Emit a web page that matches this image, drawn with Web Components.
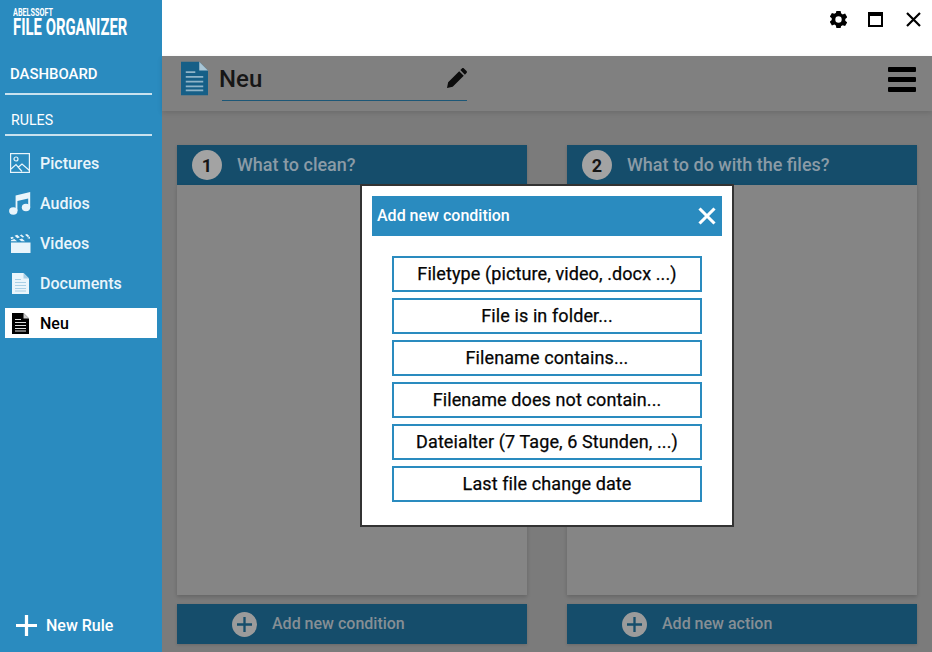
<!DOCTYPE html>
<html lang="en">
<head>
<meta charset="utf-8">
<title>File Organizer</title>
<style>
  html, body { margin: 0; height: 100%; overflow: hidden; }
  body { font-family: Roboto, "Liberation Sans", sans-serif; }
</style>
</head>
<body>
<app-window>
  <app-sidebar slot="sidebar">
    <nav-item icon="picture">Pictures</nav-item>
    <nav-item icon="music">Audios</nav-item>
    <nav-item icon="clapper">Videos</nav-item>
    <nav-item icon="doc">Documents</nav-item>
    <nav-item icon="doc" selected>Neu</nav-item>
  </app-sidebar>
  <title-bar slot="top"></title-bar>
  <rule-header slot="top">Neu</rule-header>
  <step-panel num="1" heading="What to clean?" action="Add new condition"></step-panel>
  <step-panel num="2" heading="What to do with the files?" action="Add new action"></step-panel>
  <condition-dialog slot="overlay" heading="Add new condition">
    <dialog-option>Filetype (picture, video, .docx ...)</dialog-option>
    <dialog-option>File is in folder...</dialog-option>
    <dialog-option>Filename contains...</dialog-option>
    <dialog-option>Filename does not contain...</dialog-option>
    <dialog-option>Dateialter (7 Tage, 6 Stunden, ...)</dialog-option>
    <dialog-option>Last file change date</dialog-option>
  </condition-dialog>
</app-window>

<script>
const ICONS = {
  picture: `<svg viewBox="0 0 20 20" width="20" height="20" fill="none" stroke="currentColor" stroke-width="1.2">
      <rect x=".6" y=".6" width="18.8" height="18.8"/><circle cx="6" cy="6" r="2"/>
      <path d="M1 16l5-4.5 6 7M8.500 14l3.500-3 7.500 6.500"/></svg>`,
  music: `<svg viewBox="0 0 22 23" width="22" height="23" fill="currentColor">
      <ellipse cx="4.300" cy="19" rx="4.200" ry="3.700"/><ellipse cx="17" cy="15.500" rx="4.200" ry="3.700"/>
      <path d="M6.600 19V3.500L21.200 0v15.500h-2V6.500L8.400 9v10z"/></svg>`,
  clapper: `<svg viewBox="0 0 21 19" width="21" height="19" fill="currentColor">
      <path d="M1 8.500h19.500V19H1z"/>
      <path d="M.4 3.600l2-.9 1.600 1.300-2.700 1.200zM4.600 1.800l2.500-1 2.800 2.400-2.500 1zM9.800 1.200l1.800-.7 2.700 2.400-1.800.7zM15 .7l2-.7 2.600 2.300-2 .8z"/>
      <path d="M1 6.300l3.300-1.400 2.800 2.400H1zM9 5.600l3-1.200 3 2.900H11.400zM17 4l3-1.200v2z"/></svg>`,
  doc: `<svg viewBox="0 0 17 21" width="17" height="21">
      <path fill="currentColor" d="M0 0h11.500L17 5.500V21H0z"/>
      <path fill="var(--fold, #a9d0e6)" d="M11.500 0L17 5.500h-5.500z"/>
      <path stroke="var(--lines, #a9d0e6)" stroke-width="1.100" d="M3 6.500h6M3 9.500h11M3 12.500h11M3 15.500h11M3 18h11"/></svg>`,
  plus: `<svg viewBox="0 0 22 22" width="22" height="22" fill="currentColor"><path d="M9.300 0h3.400v9.300H22v3.400h-9.300V22H9.300v-9.300H0V9.300h9.300z"/></svg>`,
  close: `<svg viewBox="0 0 18 18" width="18" height="18" fill="none" stroke="currentColor" stroke-width="3.100"><path d="M1.500 1.500l15 15M16.500 1.500l-15 15"/></svg>`
};

class AppWindow extends HTMLElement {
  constructor() {
    super();
    this.attachShadow({mode: 'open'}).innerHTML = `
      <style>
        :host { display: grid; grid-template-columns: 162px 1fr; height: 652px; position: relative; overflow: hidden; }
        .right { display: flex; flex-direction: column; min-width: 0; background: #7b7b7b; }
        .panels { flex: 1; display: grid; grid-template-columns: 350px 350px; gap: 40px; padding: 34px 15px 8px; min-height: 0; }
      </style>
      <slot name="sidebar"></slot>
      <div class="right">
        <slot name="top"></slot>
        <div class="panels"><slot></slot></div>
      </div>
      <slot name="overlay"></slot>`;
  }
}

class AppSidebar extends HTMLElement {
  constructor() {
    super();
    this.attachShadow({mode: 'open'}).innerHTML = `
      <style>
        :host { display: flex; flex-direction: column; background: #2a8bbf; color: #fff; height: 652px; }
        .logo { padding: 7px 0 0 13px; height: 52px; box-sizing: border-box; font-weight: 700; }
        .logo div { transform-origin: 0 0; white-space: nowrap; }
        .small { font-size: 11px; line-height: 11px; transform: scaleX(.66); }
        .big { font-size: 24px; line-height: 18px; transform: scaleX(.62); }
        .sect { margin: 0 10px 0 5px; border-bottom: 2px solid rgba(255,255,255,.75); padding-left: 5px; }
        .dash { font-size: 14.900px; font-weight: 500; height: 41px; line-height: 45px; }
        .rules { font-size: 14.200px; height: 39px; line-height: 50px; padding-left: 6px; margin-bottom: 12px; }
        .items { display: flex; flex-direction: column; gap: 10px; }
        .new { margin-top: auto; display: flex; align-items: center; gap: 9px; padding: 0 0 16px 16px; font-size: 16px; font-weight: 500; }
        .new svg { width: 21px; height: 21px; }
      </style>
      <div class="logo"><div class="small">ABELSSOFT</div><div class="big">FILE ORGANIZER</div></div>
      <div class="sect dash">DASHBOARD</div>
      <div class="sect rules">RULES</div>
      <div class="items"><slot></slot></div>
      <div class="new">${ICONS.plus}<span>New Rule</span></div>`;
  }
}

class NavItem extends HTMLElement {
  constructor() {
    super();
    this.attachShadow({mode: 'open'});
  }
  connectedCallback() {
    this.shadowRoot.innerHTML = `
      <style>
        :host { display: flex; align-items: center; height: 30px; margin-left: 5px; width: 152px; font-size: 16px; font-weight: 500; color: #eaf5fb; }
        :host([selected]) { background: #fff; color: #000; --fold: #ccc; --lines: #ddd; }
        .ic { width: 35px; display: flex; justify-content: center; padding-right: 5px; box-sizing: border-box; }
      </style>
      <span class="ic">${ICONS[this.getAttribute('icon')]}</span><slot></slot>`;
  }
}

class TitleBar extends HTMLElement {
  constructor() {
    super();
    this.attachShadow({mode: 'open'}).innerHTML = `
      <style>
        :host { display: flex; justify-content: flex-end; align-items: center; height: 56px; padding: 0 11px 17px 0; box-sizing: border-box; background: #fff; color: #000; }
        svg { display: block; }
        .gear { margin-right: 21px; }
        .max { margin-right: 23px; }
      </style>
      <svg class="gear" viewBox="0 0 24 24" width="17" height="17" fill="currentColor"><path fill-rule="evenodd" d="M9 0h6l.7 3.600c.8.300 1.500.700 2.100 1.200l3.500-1.200 3 5.200-2.800 2.400c.1.800.1 1.600 0 2.400l2.800 2.400-3 5.200-3.500-1.200c-.6.500-1.300.9-2.100 1.200L15 24H9l-.7-3.600c-.8-.3-1.500-.7-2.100-1.200l-3.500 1.200-3-5.200 2.800-2.400c-.1-.8-.1-1.600 0-2.400L-.3 8l3-5.200 3.500 1.200c.6-.5 1.300-.9 2.100-1.200zM12 16.500a4.500 4.500 0 1 0 0-9 4.500 4.500 0 0 0 0 9z"/></svg>
      <svg class="max" width="15" height="15" viewBox="0 0 15 15"><path fill="currentColor" fill-rule="evenodd" d="M0 0h15v15H0zM2 4v9h11V4z"/></svg>
      <svg width="15" height="15" viewBox="0 0 15 15" fill="none" stroke="currentColor" stroke-width="2.200"><path d="M1 1l13 13M14 1L1 14"/></svg>`;
  }
}

class RuleHeader extends HTMLElement {
  constructor() {
    super();
    this.attachShadow({mode: 'open'}).innerHTML = `
      <style>
        :host { display: flex; align-items: flex-start; height: 55px; box-sizing: border-box; background: #808080; color: #161616; padding: 5px 16px 0 19px; box-shadow: 0 2px 5px rgba(0,0,0,.12); position: relative; }
        .doc { width: 27px; height: 35px; --fold: #a9c6d6; --lines: #8fb4c8; color: #165f87; }
        .doc svg { width: 27px; height: 35px; display: block; }
        .name { position: relative; margin-left: 14px; width: 245px; height: 39px; border-bottom: 1px solid #1c5777; }
        .name span { position: absolute; left: -3px; top: 2px; font-size: 24px; font-weight: 500; line-height: 32px; }
        .name svg { position: absolute; right: 0; top: 7px; }
        .menu { margin-left: auto; margin-top: 6px; width: 28px; display: flex; flex-direction: column; gap: 5px; }
        .menu i { display: block; height: 5px; background: #000; border-radius: 1px; }
      </style>
      <span class="doc">${ICONS.doc}</span>
      <div class="name"><span><slot></slot></span>
        <svg width="20" height="20" viewBox="0 0 21 21" fill="#0c0c0c"><path d="M0 21l1.200-6L12.800 3.400l4.800 4.800L6 19.800zM14 2.200L15.700.5c.6-.6 1.500-.6 2.100 0l2.700 2.700c.6.600.6 1.500 0 2.100L18.800 7z"/></svg>
      </div>
      <div class="menu"><i></i><i></i><i></i></div>`;
  }
}

class StepPanel extends HTMLElement {
  constructor() {
    super();
    this.attachShadow({mode: 'open'});
  }
  connectedCallback() {
    this.shadowRoot.innerHTML = `
      <style>
        :host { display: flex; flex-direction: column; gap: 9px; min-height: 0; }
        .head { height: 40px; background: #154d6b; display: flex; align-items: center; padding-left: 15px; color: #8b9ba6; font-size: 18px; font-weight: 500; box-shadow: 0 1px 3px rgba(0,0,0,.15); }
        .num { width: 30px; height: 30px; border-radius: 50%; background: #a3a3a3; color: #151515; display: flex; align-items: center; justify-content: center; font-size: 18px; font-weight: 700; margin-right: 15px; }
        .title { position: relative; top: -1px; }
        .card { display: flex; flex-direction: column; flex: 1; }
        .body { flex: 1; background: #858585; box-shadow: 0 2px 4px rgba(0,0,0,.18); }
        .act { height: 40px; background: #154d6b; color: #868f95; display: flex; align-items: center; padding-left: 55px; font-size: 16px; font-weight: 500; box-shadow: 0 1px 3px rgba(0,0,0,.15); }
        .plus { width: 25px; height: 25px; border-radius: 50%; background: #9b9b9b; color: #154d6b; display: flex; align-items: center; justify-content: center; margin-right: 15px; }
        .plus svg { width: 15px; height: 15px; }
        .lbl { position: relative; top: -1px; }
      </style>
      <div class="card">
        <div class="head"><span class="num">${this.getAttribute('num')}</span><span class="title">${this.getAttribute('heading')}</span></div>
        <div class="body"></div>
      </div>
      <div class="act"><span class="plus">${ICONS.plus}</span><span class="lbl">${this.getAttribute('action')}</span></div>`;
  }
}

class ConditionDialog extends HTMLElement {
  constructor() {
    super();
    this.attachShadow({mode: 'open'});
  }
  connectedCallback() {
    this.shadowRoot.innerHTML = `
      <style>
        :host { position: absolute; left: 360px; top: 184px; width: 374px; height: 343px; box-sizing: border-box; background: #fff; border: 2px solid #333; padding: 10px; display: block; }
        .bar { height: 40px; background: #2a8bbf; color: #fff; display: flex; align-items: center; justify-content: space-between; padding: 0 6px 0 5px; font-size: 16px; font-weight: 500; }
        .bar span { position: relative; top: -1px; }
        .list { display: flex; flex-direction: column; gap: 6px; padding: 20px 20px 0; }
        svg { display: block; }
      </style>
      <div class="bar"><span>${this.getAttribute('heading')}</span>${ICONS.close}</div>
      <div class="list"><slot></slot></div>`;
  }
}

class DialogOption extends HTMLElement {
  constructor() {
    super();
    this.attachShadow({mode: 'open'}).innerHTML = `
      <style>
        :host { display: flex; align-items: center; justify-content: center; height: 36px; box-sizing: border-box; border: 2px solid #2a8bbf; color: #050505; font-size: 18px; letter-spacing: .1px; -webkit-text-stroke: .25px #050505; padding-bottom: 1px; }
      </style>
      <slot></slot>`;
  }
}

customElements.define('app-window', AppWindow);
customElements.define('app-sidebar', AppSidebar);
customElements.define('nav-item', NavItem);
customElements.define('title-bar', TitleBar);
customElements.define('rule-header', RuleHeader);
customElements.define('step-panel', StepPanel);
customElements.define('condition-dialog', ConditionDialog);
customElements.define('dialog-option', DialogOption);
</script>
</body>
</html>
